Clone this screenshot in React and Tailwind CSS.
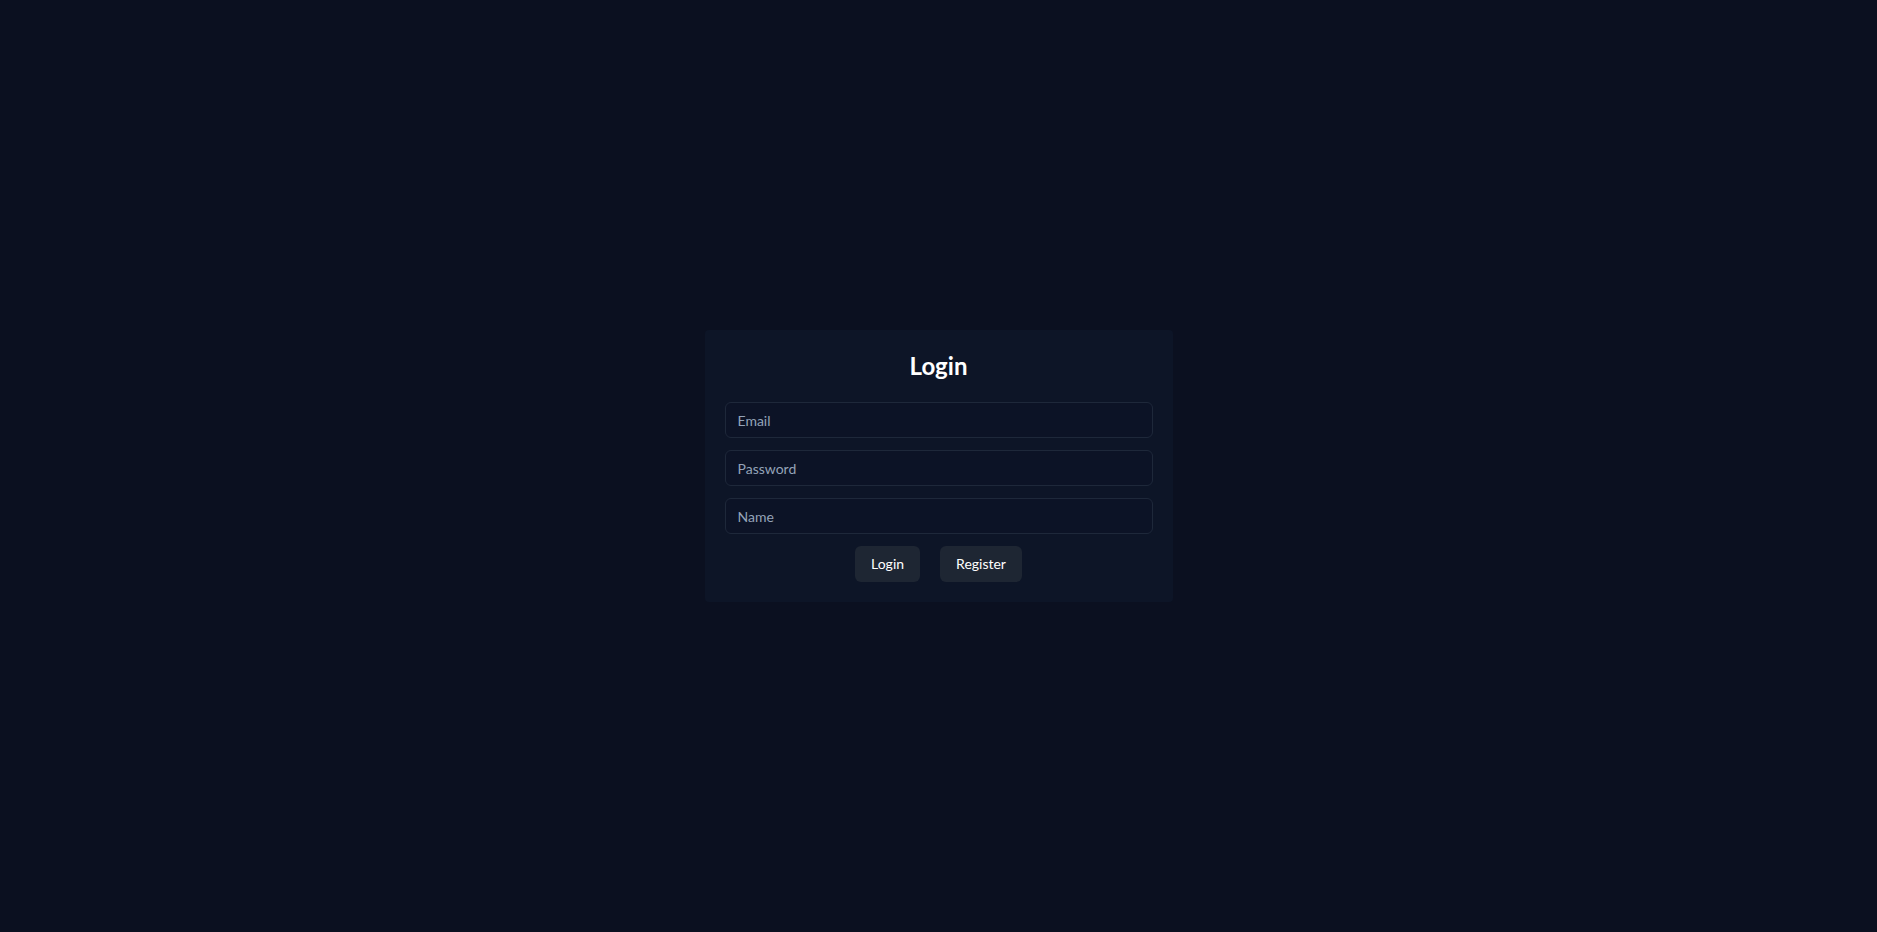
import { useState } from "react";

export default function App() {
  const [email, setEmail] = useState("");
  const [password, setPassword] = useState("");
  const [name, setName] = useState("");

  return (
    <div
      className="min-h-screen w-full bg-[#0b1020] flex items-center justify-center"
      style={{ fontFamily: "Lato, 'Noto Sans', sans-serif" }}
    >
      <div className="w-[468px] bg-[#0d1527] rounded p-5 flex flex-col gap-3">
        <h2 className="text-2xl leading-8 font-bold text-white text-center mb-2">Login</h2>
        <input
          type="email"
          placeholder="Email"
          value={email}
          onChange={(e) => setEmail(e.target.value)}
          className="h-9 w-full px-3 rounded-md bg-[#0c1326] border border-[#1e283a] text-sm text-white placeholder:text-[#94a3b8] outline-none"
        />
        <input
          type="password"
          placeholder="Password"
          value={password}
          onChange={(e) => setPassword(e.target.value)}
          className="h-9 w-full px-3 rounded-md bg-[#0c1326] border border-[#1e283a] text-sm text-white placeholder:text-[#94a3b8] outline-none"
        />
        <input
          type="text"
          placeholder="Name"
          value={name}
          onChange={(e) => setName(e.target.value)}
          className="h-9 w-full px-3 rounded-md bg-[#0c1326] border border-[#1e283a] text-sm text-white placeholder:text-[#94a3b8] outline-none"
        />
        <div className="flex justify-center gap-5">
          <button className="h-9 px-4 rounded-md bg-[#1e2633] text-sm text-white">Login</button>
          <button className="h-9 px-4 rounded-md bg-[#1e2633] text-sm text-white">Register</button>
        </div>
      </div>
    </div>
  );
}
